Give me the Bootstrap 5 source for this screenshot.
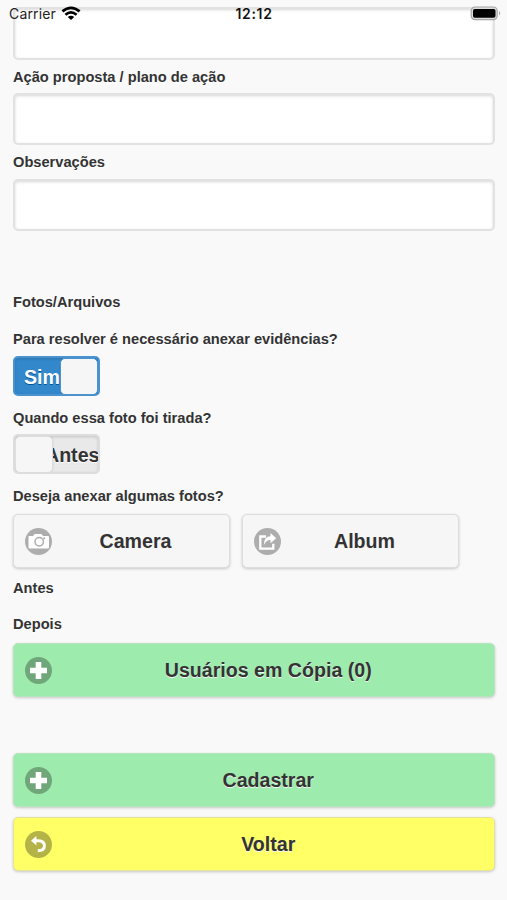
<!DOCTYPE html>
<html lang="pt-BR">
<head>
<meta charset="utf-8">
<meta name="viewport" content="width=device-width, initial-scale=1">
<title>Cadastro</title>
<link href="https://cdn.jsdelivr.net/npm/bootstrap@5.3.0/dist/css/bootstrap.min.css" rel="stylesheet">
<style>
body{background:#f9f9f9;color:#333;font-family:"Liberation Sans",Arial,sans-serif;height:900px;overflow:hidden}
.status{height:28px;z-index:5;color:#222;font-family:Inter,sans-serif;font-size:14px;line-height:28px;padding:0 6px 0 9px}
.status .carrier{letter-spacing:.15px}
.status .clock{left:1px;right:0;color:#111;font-weight:600;font-size:14px;letter-spacing:.7px;text-align:center;top:0}
.screen{padding:7px 12.5px 0 13px}
.lbl{font-size:14.65px;font-weight:700;height:33px;line-height:35px;margin:0;text-shadow:0 1px 0 #fff;white-space:nowrap}
.field{height:52px;padding:0;border:2px solid #e2e2e2;border-radius:5px;box-shadow:inset 0 1px 3px rgba(0,0,0,.16);background:#fff;resize:none;display:block}
.gap-photos{height:54px}
.flip{width:87px;height:40px;border:2px solid #ddd;border-radius:5px;background:#e9e9e9;box-shadow:inset 0 1px 3px rgba(0,0,0,.16);font-weight:700;font-size:19.6px;line-height:38px;overflow:hidden}
.flip .knob{width:38px;height:37px;flex:none;background:#f6f6f6;border:1px solid #ddd;border-radius:5px;box-shadow:0 0 2px rgba(0,0,0,.12);z-index:1}
.flip-on{background:#3388cc;border-color:#4a93cf;color:#fff;text-shadow:0 1px 0 #059}
.flip-on .knob{border-color:#4a93cf}
.flip-on .txt{width:46px;padding-left:9px}
.flip-off .txt{margin-left:-8px;text-shadow:0 1px 0 #fff}
.act{height:54px;border:1px solid #ddd;border-radius:5px;background:#f6f6f6;color:#333;font-size:19.6px;font-weight:700;line-height:53px;padding:0 25px 0 53px;box-shadow:0 1px 3px rgba(0,0,0,.2);text-shadow:0 1px 0 #f3f3f3}
.act.half{width:217px}
.act.wide{padding-left:54px}
.act-green,.act-green:hover{background:#9eebae;border-color:#b5e5bd}
.act-yellow,.act-yellow:hover{background:#ffff66;border-color:#e3e39c}
.act svg{left:11px;top:13px}
</style>
</head>
<body>
<header class="status position-absolute top-0 start-0 w-100 d-flex align-items-center justify-content-between">
  <div class="d-flex align-items-center"><span class="carrier">Carrier</span>
    <svg class="ms-1" width="22" height="16" viewBox="0 0 22 16" fill="none" stroke="#000" stroke-width="2.7"><path d="M2.4 5.4Q11 -1.7 19.6 5.4"/><path d="M5.4 8.8Q11 4 16.6 8.8"/><path d="M11 14L7.8 10.9Q11 8.4 14.2 10.9Z" fill="#000" stroke="none"/></svg>
  </div>
  <span class="clock position-absolute">12:12</span>
  <svg style="margin-right:-1px" width="32" height="16" viewBox="0 0 32 16"><rect x="1.2" y="1" width="26" height="12.6" rx="3.8" fill="#ddd" stroke="#a5a5a5" stroke-width="1.2"/><rect x="3" y="2.9" width="22.5" height="8.9" rx="1.8" fill="#000"/><path d="M29 5q2.5 2.2 0 4.5z" fill="#aaa"/></svg>
</header>
<main class="screen">
  <textarea class="field w-100" style="height:53px" aria-label="Descrição"></textarea>
  <label class="lbl d-block" for="acao">Ação proposta / plano de ação</label>
  <textarea class="field w-100" id="acao"></textarea>
  <label class="lbl d-block" style="height:34px" for="obs">Observações</label>
  <textarea class="field w-100" id="obs"></textarea>
  <div class="gap-photos"></div>
  <p class="lbl">Fotos/Arquivos</p>
  <p class="lbl mt-1">Para resolver é necessário anexar evidências?</p>
  <div class="flip flip-on d-flex" style="margin-top:1px"><span class="txt">Sim</span><span class="knob"></span></div>
  <p class="lbl" style="margin-top:5px">Quando essa foto foi tirada?</p>
  <div class="flip flip-off d-flex"><span class="knob"></span><span class="txt">Antes</span></div>
  <p class="lbl" style="margin-top:5px">Deseja anexar algumas fotos?</p>
  <div class="d-flex" style="gap:12px;margin-top:2px">
    <button class="btn act half position-relative">Camera
      <svg class="position-absolute" width="27" height="27" viewBox="0 0 27 27"><circle cx="13.5" cy="13.5" r="13.5" fill="#adadad"/><path d="M4 8h4l1.5-2h7L18 8h5q1 0 1 1v10.5q0 1-1 1H4.5q-1 0-1-1V9q0-1 .5-1z" fill="#fff"/><circle cx="14.2" cy="13.8" r="4.2" fill="none" stroke="#adadad" stroke-width="1.5"/><circle cx="19.2" cy="10.3" r="1" fill="#adadad"/></svg>
    </button>
    <button class="btn act half position-relative">Album
      <svg class="position-absolute" width="27" height="27" viewBox="0 0 27 27"><circle cx="13.5" cy="13.5" r="13.5" fill="#adadad"/><path d="M12 8.5H6.3v12.2h13v-5" fill="none" stroke="#fff" stroke-width="2.3"/><path d="M9.8 17.3Q9.8 8.3 16.5 8.3V5l5.7 5.2-5.7 5V12Q12 12 9.8 17.3z" fill="#fff"/></svg>
    </button>
  </div>
  <p class="lbl" style="margin-top:3px">Antes</p>
  <p class="lbl" style="margin-top:3px">Depois</p>
  <button class="btn act wide act-green w-100 position-relative d-block" style="margin-top:3px">Usuários em Cópia (0)
    <svg class="position-absolute" width="27" height="27" viewBox="0 0 27 27"><circle cx="13.5" cy="13.5" r="13.5" fill="#6fa77a"/><path d="M10.7 5h5.6v5.7H22v5.6h-5.7V22h-5.6v-5.7H5v-5.6h5.7z" fill="#fff"/></svg>
  </button>
  <button class="btn act wide act-green w-100 position-relative d-block" style="margin-top:56px">Cadastrar
    <svg class="position-absolute" width="27" height="27" viewBox="0 0 27 27"><circle cx="13.5" cy="13.5" r="13.5" fill="#6fa77a"/><path d="M10.7 5h5.6v5.7H22v5.6h-5.7V22h-5.6v-5.7H5v-5.6h5.7z" fill="#fff"/></svg>
  </button>
  <button class="btn act wide act-yellow w-100 position-relative d-block" style="margin-top:10px">Voltar
    <svg class="position-absolute" width="27" height="27" viewBox="0 0 27 27"><circle cx="13.5" cy="13.5" r="13.5" fill="#b3b347"/><path d="M10 9.8h3.4q6 .4 6 5 0 5-6.6 5" fill="none" stroke="#fff" stroke-width="2.9"/><path d="M11.4 5v9.5L6 9.8z" fill="#fff"/></svg>
  </button>
</main>
<script src="https://cdn.jsdelivr.net/npm/bootstrap@5.3.0/dist/js/bootstrap.bundle.min.js"></script>
</body>
</html>
